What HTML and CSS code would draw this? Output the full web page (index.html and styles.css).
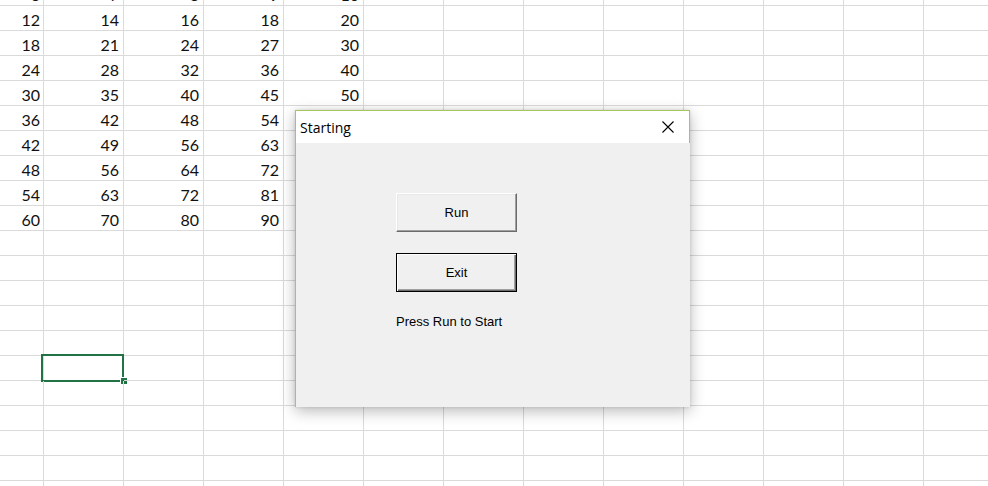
FILE: index.html
```html
<!DOCTYPE html>
<html>
<head>
<meta charset="utf-8">
<link rel="stylesheet" href="styles.css">
</head>
<body>
<div class="sheet" id="sheet"></div>
<div class="dialog">
  <div class="titlebar">
    <span class="title">Starting</span>
    <svg class="close" width="12" height="12" viewBox="0 0 12 12"><path d="M0.5 0.5 L11.5 11.5 M11.5 0.5 L0.5 11.5" stroke="#000" stroke-width="1.1" fill="none"/></svg>
  </div>
  <div class="dbody">
    <button class="btn">Run</button>
    <button class="btn default">Exit</button>
    <div class="label">Press Run to Start</div>
  </div>
</div>
<script>
  var sheet = document.getElementById('sheet');
  for (var r = 0; r < 21; r++) {
    var row = document.createElement('div');
    row.className = 'row';
    for (var c = 0; c < 13; c++) {
      var cell = document.createElement('div');
      cell.className = c === 0 ? 'cell first' : 'cell';
      var k = r + 1;
      var hidden = (c === 4 && r >= 5);
      if (r <= 9 && c < 5 && !hidden) cell.textContent = String((c + 6) * k);
      if (r === 15 && c === 1) cell.className += ' sel';
      row.appendChild(cell);
    }
    sheet.appendChild(row);
  }
</script>
</body>
</html>
```

FILE: styles.css
```css
html, body {
  margin: 0;
  padding: 0;
  background: #fff;
  overflow: hidden;
  width: 988px;
  height: 486px;
}
.sheet {
  margin-top: -19px;
  width: 988px;
  overflow: hidden;
  font-family: Lato, "Liberation Sans", sans-serif;
  font-size: 16px;
  color: #111;
}
.row {
  display: flex;
  height: 25px;
}
.cell {
  box-sizing: border-box;
  width: 80px;
  height: 25px;
  flex: none;
  border-right: 1px solid #dadada;
  border-bottom: 1px solid #dadada;
  text-align: right;
  padding: 3px 4px 0 0;
  line-height: 21px;
  position: relative;
}
.cell.first {
  width: 44px;
  padding-right: 3px;
}
.cell.sel::before {
  content: "";
  position: absolute;
  top: -2px;
  left: -3px;
  right: -1px;
  bottom: -2px;
  border: 2px solid #217346;
}
.cell.sel::after {
  content: "";
  position: absolute;
  right: -4px;
  bottom: -4px;
  width: 6px;
  height: 6px;
  background: #217346;
  border-left: 1px solid #fff;
  border-top: 1px solid #fff;
}
.dialog {
  position: absolute;
  left: 295px;
  top: 110px;
  width: 394px;
  height: 296px;
  border-left: 1px solid #a3c65e;
  border-top: 1px solid #a3c65e;
  background: #f0f0f0;
  box-shadow: 0 4px 14px rgba(0, 0, 0, 0.28), 0 0 3px rgba(0, 0, 0, 0.12);
  display: flex;
  flex-direction: column;
}
.titlebar {
  height: 32px;
  background: #fff;
  border-right: 1px solid #a3c65e;
  display: flex;
  align-items: center;
  justify-content: space-between;
  padding: 0 15px 0 4px;
  flex: none;
}
.title {
  font-family: "Open Sans", "Noto Sans", sans-serif;
  font-size: 14px;
  color: #000;
}
.close {
  display: block;
}
.dbody {
  flex: 1;
  padding: 50px 0 0 100px;
  display: flex;
  flex-direction: column;
  align-items: flex-start;
}
.btn {
  box-sizing: border-box;
  width: 121px;
  height: 39px;
  background: #f0f0f0;
  font-family: "Liberation Sans", Arial, sans-serif;
  font-size: 13px;
  color: #000;
  border: 1px solid;
  border-color: #fff #6b6b6b #6b6b6b #fff;
  box-shadow: inset -1px -1px 0 #a0a0a0, inset 1px 1px 0 #e8e8e8;
  padding: 0;
  margin: 0 0 21px 0;
}
.btn.default {
  border: 1px solid #000;
  box-shadow: inset 1px 1px 0 #fff, inset -1px -1px 0 #6b6b6b, inset -2px -2px 0 #a0a0a0;
  margin-bottom: 22px;
}
.label {
  font-family: "Liberation Sans", Arial, sans-serif;
  font-size: 13px;
  color: #000;
}
```
